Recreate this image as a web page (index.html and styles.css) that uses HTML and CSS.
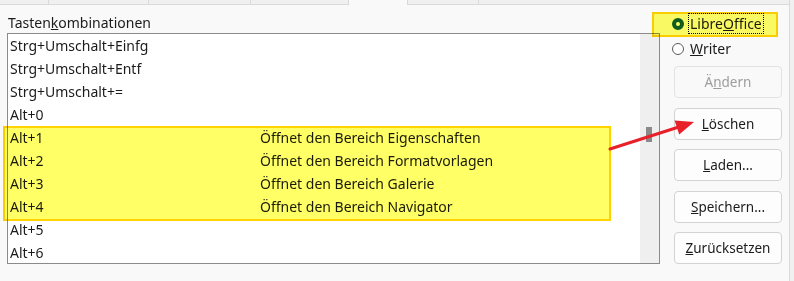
FILE: index.html
```html
<!DOCTYPE html>
<html lang="de">
<head>
    <meta charset="UTF-8">
    <title>Tastatur anpassen</title>
    <link rel="stylesheet" href="styles.css">
</head>
<body>
    <div class="window">
        <div class="tabs">
            <span class="tab tab-1"></span>
            <span class="tab tab-2"></span>
            <span class="tab tab-3"></span>
            <span class="tab tab-4"></span>
            <span class="tab tab-sel"></span>
            <span class="tab tab-6"></span>
            <span class="tab tab-rest"></span>
        </div>

        <div class="pane">
            <div class="keys">
                <div class="keys-label">Tasten<u>k</u>ombinationen</div>
                <div class="list">
                    <div class="rows">
                        <div class="row"><span>Strg+Umschalt+Einfg</span><span></span></div>
                        <div class="row"><span>Strg+Umschalt+Entf</span><span></span></div>
                        <div class="row"><span>Strg+Umschalt+=</span><span></span></div>
                        <div class="row"><span>Alt+0</span><span></span></div>
                        <div class="row"><span>Alt+1</span><span>Öffnet den Bereich Eigenschaften</span></div>
                        <div class="row"><span>Alt+2</span><span>Öffnet den Bereich Formatvorlagen</span></div>
                        <div class="row"><span>Alt+3</span><span>Öffnet den Bereich Galerie</span></div>
                        <div class="row"><span>Alt+4</span><span>Öffnet den Bereich Navigator</span></div>
                        <div class="row"><span>Alt+5</span><span></span></div>
                        <div class="row"><span>Alt+6</span><span></span></div>
                    </div>
                    <div class="scrollbar"><div class="thumb"></div></div>
                </div>
            </div>

            <div class="side">
                <label class="radio">
                    <span class="dot checked"></span>
                    <span class="radio-text focused">Libre<u>O</u>ffice</span>
                </label>
                <label class="radio">
                    <span class="dot"></span>
                    <span class="radio-text"><u>W</u>riter</span>
                </label>
                <div class="buttons">
                    <button class="btn" disabled>Ä<u>n</u>dern</button>
                    <button class="btn"><u>L</u>öschen</button>
                    <button class="btn"><u>L</u>aden...</button>
                    <button class="btn"><u>S</u>peichern...</button>
                    <button class="btn"><u>Z</u>urücksetzen</button>
                </div>
            </div>
        </div>
    </div>

    <!-- Markierungen -->
    <div class="mark mark-rows"></div>
    <div class="mark mark-radio"></div>
    <svg class="arrow" width="794" height="281" viewBox="0 0 794 281">
        <line x1="610" y1="149" x2="678" y2="127.2" stroke="#e8202a" stroke-width="3" stroke-linecap="round"/>
        <polygon points="694,122 679.2,134.4 674.6,120.6" fill="#e8202a"/>
    </svg>
</body>
</html>
```

FILE: styles.css
```css
body {
    margin: 0;
    width: 794px;
    height: 281px;
    overflow: hidden;
    position: relative;
    background-color: #f0f0f0;
    font-family: 'Noto Sans', 'Open Sans', sans-serif;
    font-size: 14px;
    color: #1b1b1b;
}

.window {
    width: 790px;
}

/* Reiterleiste (oben abgeschnitten) */
.tabs {
    display: flex;
    height: 5px;
}
.tab {
    box-sizing: border-box;
    height: 5px;
    background-color: #f0f0f0;
    border-right: 1px solid #d9d9d9;
    border-bottom: 1px solid #d9d9d9;
}
.tab-1 { width: 49px; }
.tab-2 { width: 100px; }
.tab-3 { width: 102px; }
.tab-4 { width: 98px; }
.tab-sel { width: 59px; background-color: #f9f9f9; border-bottom: none; }
.tab-6 { width: 71px; }
.tab-rest { flex: 1; }

.pane {
    display: flex;
    height: 276px;
    background-color: #f9f9f9;
    border-right: 1px solid #d9d9d9;
    padding: 7px 0 0 7px;
    box-sizing: border-box;
}

.keys {
    width: 653px;
}
.keys-label {
    height: 21px;
    line-height: 21px;
    padding-left: 1px;
}

.list {
    display: flex;
    box-sizing: border-box;
    height: 231px;
    border: 1px solid #8b8b8b;
    background-color: #fff;
    overflow: hidden;
}
.rows {
    flex: 1;
}
.row {
    display: grid;
    grid-template-columns: 250px 1fr;
    height: 23px;
    line-height: 23px;
    padding-left: 2px;
    white-space: nowrap;
}
.scrollbar {
    width: 19px;
    background-color: #efefef;
    padding-top: 93px;
    box-sizing: border-box;
}
.thumb {
    width: 6px;
    height: 15px;
    margin-left: 6px;
    background-color: #8a8a8a;
}

.side {
    width: 108px;
    margin-left: 14px;
    margin-top: -1px;
}
.radio {
    display: flex;
    align-items: center;
    height: 25px;
    margin-left: -2px;
}
.dot {
    box-sizing: border-box;
    width: 12px;
    height: 12px;
    border-radius: 50%;
    border: 1px solid #5c5c5c;
    background-color: #fff;
    margin-right: 5px;
}
.dot.checked {
    border: 4px solid #0d5b47;
}
.radio-text {
    line-height: 19px;
    padding: 0 0 0 1px;
}
.focused {
    outline: 1px dotted #000;
    outline-offset: 0;
    padding-right: 1px;
}

.buttons {
    display: flex;
    flex-direction: column;
    gap: 9.5px;
    margin-top: 5px;
}
.btn {
    height: 32px;
    font-family: inherit;
    font-size: 13.5px;
    color: #1b1b1b;
    background-color: #fdfdfd;
    border: 1px solid #d3d3d3;
    border-radius: 4px;
    padding: 0;
}
.btn:disabled {
    color: #9d9d9d;
    border-color: #e3e3e3;
    background-color: #f9f9f9;
}

/* Gelbe Hervorhebungen und Pfeil über dem Dialog */
.mark {
    position: absolute;
    box-sizing: border-box;
    background-color: #ffff66;
    border: 2px solid #ffd200;
    mix-blend-mode: multiply;
}
.mark-rows {
    left: 3px;
    top: 126px;
    width: 608px;
    height: 95px;
}
.mark-radio {
    left: 652px;
    top: 12px;
    width: 126px;
    height: 25px;
}
.arrow {
    position: absolute;
    left: 0;
    top: 0;
    pointer-events: none;
}
```
